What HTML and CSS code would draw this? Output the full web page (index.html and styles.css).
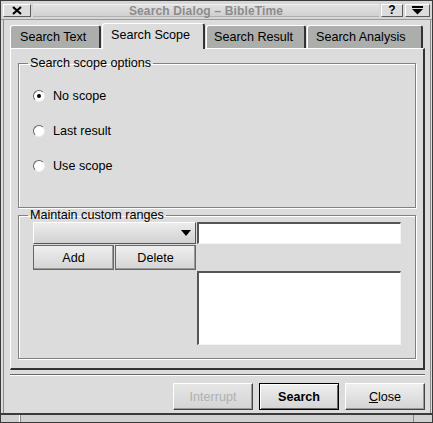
FILE: index.html
```html
<!DOCTYPE html>
<html>
<head>
<meta charset="utf-8">
<link rel="stylesheet" href="styles.css">
</head>
<body>
<div class="win">
  <div class="titlebar">
    <div class="tbtn tclose"><svg width="10" height="9" viewBox="0 0 10 9"><path d="M1 1 L9 8 M9 1 L1 8" stroke="#000" stroke-width="2.2"/></svg></div>
    <div class="ttitle">Search Dialog – BibleTime</div>
    <div class="tbtn thelp">?</div>
    <div class="tbtn tmenu"><svg width="11" height="9" viewBox="0 0 11 9"><rect x="0" y="0" width="11" height="2" fill="#000"/><path d="M0 3 L11 3 L5.5 8.5 Z" fill="#000"/></svg></div>
  </div>
  <div class="frame">
    <div class="client">
      <div class="tabs">
        <div class="tab t1">Search Text</div>
        <div class="tab t2 active">Search Scope</div>
        <div class="tab t3">Search Result</div>
        <div class="tab t4">Search Analysis</div>
      </div>
      <div class="pane">
        <fieldset class="group g1">
          <legend>Search scope options</legend>
          <div class="radio"><span class="rb checked"></span>No scope</div>
          <div class="radio"><span class="rb"></span>Last result</div>
          <div class="radio"><span class="rb"></span>Use scope</div>
        </fieldset>
        <fieldset class="group g2">
          <legend>Maintain custom ranges</legend>
          <div class="ranges">
            <div class="combo"><svg width="10" height="6" viewBox="0 0 10 6"><path d="M0 0 L10 0 L5 6 Z" fill="#000"/></svg></div>
            <div class="edit"></div>
            <div class="btn">Add</div>
            <div class="btn">Delete</div>
            <div class="list"></div>
          </div>
        </fieldset>
      </div>
      <div class="sep"></div>
      <div class="actions">
        <div class="btn big disabled">Interrupt</div>
        <div class="btn big default">Search</div>
        <div class="btn big"><u>C</u>lose</div>
      </div>
    </div>
  </div>
  <div class="bottombar">
    <div class="grip gl"></div>
    <div class="grip gm"></div>
    <div class="grip gr"></div>
  </div>
</div>
</body>
</html>
```

FILE: styles.css
```css
html, body {
  margin: 0;
  padding: 0;
  background: #dcdcdc;
}
body {
  font-family: "Liberation Sans", Arial, sans-serif;
  font-size: 12px;
  color: #000;
}
.win {
  width: 433px;
  height: 423px;
  box-sizing: border-box;
  border: 1px solid #3a3a3a;
  display: flex;
  flex-direction: column;
  background: #dcdcdc;
}
.titlebar {
  height: 18px;
  display: flex;
  align-items: center;
  padding: 0 2px 0 2px;
  background: #d6d6d6;
  border-bottom: 1px solid #9a9a9a;
  gap: 2px;
}
.tbtn {
  height: 13px;
  box-sizing: border-box;
  border-top: 1px solid #fff;
  border-left: 1px solid #fff;
  border-right: 1px solid #5a5a5a;
  border-bottom: 1px solid #5a5a5a;
  background: #dcdcdc;
  display: flex;
  align-items: center;
  justify-content: center;
  font-weight: bold;
  font-size: 12px;
  line-height: 1;
}
.tclose { width: 28px; }
.thelp { width: 22px; }
.tmenu { width: 25px; }
.ttitle {
  flex: 1;
  text-align: center;
  color: #8c8c8c;
  font-weight: bold;
  font-size: 12px;
  letter-spacing: 0.15px;
  background: linear-gradient(#e2e2e2, #d0d0d0);
  height: 13px;
  line-height: 13px;
  border-top: 1px solid #f0f0f0;
  border-bottom: 1px solid #b0b0b0;
  box-sizing: border-box;
}
.frame {
  flex: 1;
  display: flex;
  padding: 0 2px;
  border-bottom: 1px solid #3a3a3a;
}
.client {
  flex: 1;
  border-left: 1px solid #8a8a8a;
  border-right: 1px solid #8a8a8a;
  padding: 3px 5px 0 6px;
  display: flex;
  flex-direction: column;
}
.tabs {
  display: flex;
  align-items: flex-end;
  height: 25px;
}
.tab {
  height: 23px;
  box-sizing: border-box;
  flex-shrink: 0;
  background: #acaeac;
  border-top: 1px solid #fff;
  border-left: 1px solid #fff;
  border-right: 2px solid #333;
  border-top-left-radius: 3px;
  border-top-right-radius: 3px;
  padding: 4px 0 0 9px;
  font-size: 12.6px;
  margin-right: 1px;
  white-space: nowrap;
}
.tab.t1 { width: 91px; padding-left: 9px; }
.tab.t2 { width: 103px; padding-left: 8px; }
.tab.t3 { width: 100px; padding-left: 7px; }
.tab.t4 { width: 116px; padding-left: 8px; margin-right: 0; }
.tab.active {
  height: 26px;
  background: #dcdcdc;
  margin-bottom: -1px;
  position: relative;
  z-index: 1;
}
.pane {
  height: 322px;
  box-sizing: border-box;
  border-top: 1px solid #fff;
  border-left: 1px solid #fff;
  border-right: 2px solid #333;
  border-bottom: 2px solid #333;
  padding: 7px 7px 0 7px;
}
.group {
  margin: 0;
  box-sizing: border-box;
  border: 1px solid #808080;
  box-shadow: inset 1px 1px 0 #fff, 1px 1px 0 #fff;
  padding: 0 14px 0 14px;
  min-width: 0;
}
.group legend {
  padding: 0 2px;
  margin-left: -5px;
  font-size: 12.6px;
  line-height: 14px;
}
.g1 {
  height: 152px;
  padding-top: 8px;
}
.g2 {
  height: 151px;
  margin-top: 0;
  padding-top: 0;
}
.radio {
  height: 35px;
  display: flex;
  align-items: center;
  font-size: 12.6px;
}
.rb {
  width: 12px;
  height: 12px;
  box-sizing: border-box;
  border-radius: 50%;
  background: #fff;
  border: 1px solid #666;
  border-right-color: #eee;
  border-bottom-color: #eee;
  margin-right: 8px;
  display: inline-flex;
  align-items: center;
  justify-content: center;
}
.rb.checked::after {
  content: "";
  width: 4px;
  height: 4px;
  border-radius: 50%;
  background: #000;
}
.ranges {
  display: grid;
  grid-template-columns: 82px 82px 204px;
  grid-template-rows: 22px 25px 74px;
  row-gap: 1px;
}
.combo {
  grid-column: 1 / 3;
  box-sizing: border-box;
  border: 1px solid #555;
  border-top-color: #fff;
  border-left-color: #fff;
  background: linear-gradient(#ececec, #d2d2d2);
  display: flex;
  align-items: center;
  justify-content: flex-end;
  padding-right: 4px;
  margin-right: 1px;
}
.edit {
  grid-column: 3;
  box-sizing: border-box;
  background: #fff;
  border: 1px solid #f4f4f4;
  border-top: 2px solid #555;
  border-left: 2px solid #555;
}
.btn {
  box-sizing: border-box;
  border: 1px solid #444;
  border-top-color: #fff;
  border-left-color: #fff;
  box-shadow: inset -1px -1px 0 #999;
  background: linear-gradient(#efefef, #d4d4d4);
  display: flex;
  align-items: center;
  justify-content: center;
  font-size: 12.6px;
  margin-right: 1px;
}
.ranges .btn {
  outline: 1px solid #666;
  outline-offset: -1px;
}
.list {
  grid-column: 3;
  grid-row: 3;
  box-sizing: border-box;
  background: #fff;
  border: 1px solid #f4f4f4;
  border-top: 2px solid #555;
  border-left: 2px solid #555;
}
.sep {
  margin-top: 4px;
  height: 0;
  border-top: 1px solid #666;
  border-bottom: 1px solid #fff;
}
.actions {
  display: flex;
  justify-content: flex-end;
  gap: 6px;
  margin-top: 7px;
}
.btn.big {
  width: 80px;
  height: 27px;
  margin-right: 0;
}
.btn.default {
  font-weight: bold;
  border: 1px solid #000;
  box-shadow: inset 1px 1px 0 #fff, inset -1px -1px 0 #666;
}
.btn.disabled {
  color: #b0b0b0;
  background: linear-gradient(#e6e6e6, #d4d4d4);
}
.bottombar {
  height: 7px;
  display: flex;
  border-top: 1px solid #3a3a3a;
  background: #d0d0d0;
}
.grip { height: 100%; box-sizing: border-box; }
.gl { width: 19px; border-right: 1px solid #fff; }
.gm { flex: 1; border-left: 1px solid #888; }
.gr { width: 19px; border-left: 1px solid #888; }
```
